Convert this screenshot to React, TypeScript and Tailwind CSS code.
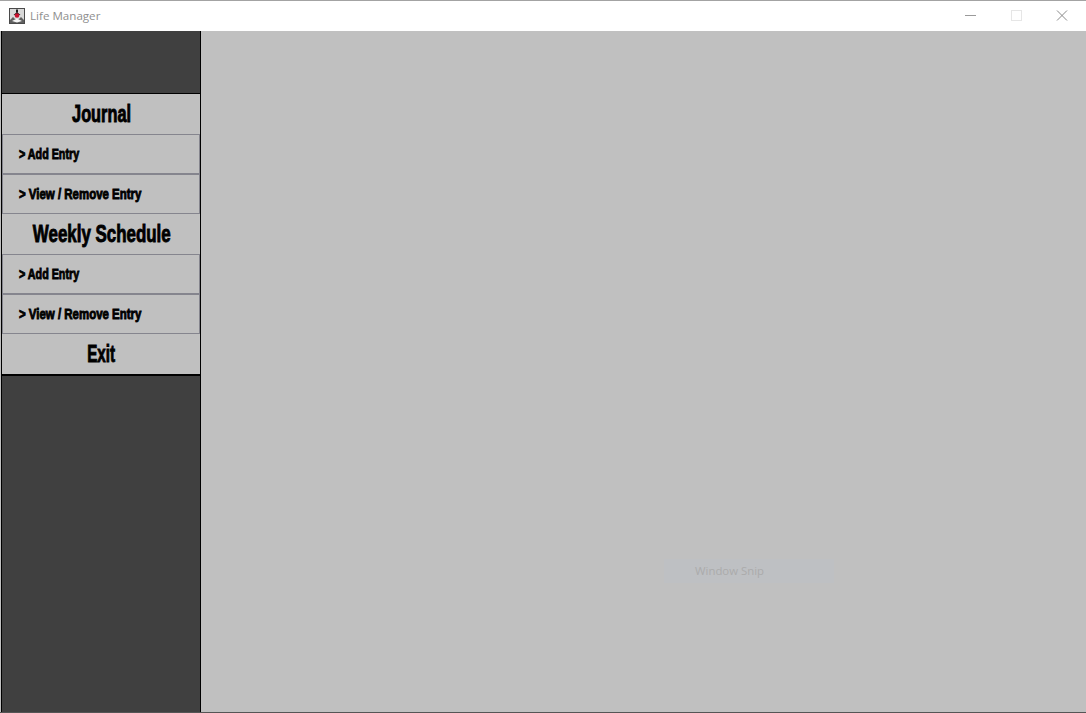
import React from "react";

const impact = "font-['Liberation_Sans',sans-serif] font-bold text-black [-webkit-text-stroke:0.9px_#000] whitespace-nowrap inline-block";

function Header({ label, scale }: { label: string; scale: string }) {
  return (
    <div className="h-10 pt-px pl-px flex items-center justify-center bg-[#c0c0c0] overflow-hidden">
      <span className={`${impact} text-[23px] ${scale}`}>{label}</span>
    </div>
  );
}

function Item({ label, scale }: { label: string; scale: string }) {
  return (
    <div className="h-10 pl-[16px] pt-[2px] flex items-center bg-[#c0c0c0] border border-[#85858e] overflow-hidden">
      <span className={`${impact} text-[14.5px] [-webkit-text-stroke:0.6px_#000] origin-left ${scale}`}>{label}</span>
    </div>
  );
}

function AppIcon() {
  return (
    <svg width="16" height="16" viewBox="0 0 16 16" className="shrink-0">
      <rect x="0.5" y="0.5" width="15" height="15" fill="#d8d8d8" stroke="#4a4a4a" />
      <path d="M1 15 V12 L4 9 L6 11 L10 11 L12 9 L15 12 V15 Z" fill="#5f5f5f" />
      <path d="M3 13 L8 10.5 L13 13 L8 14.5 Z" fill="#f4f4f4" />
      <rect x="7" y="1.5" width="2" height="3" fill="#1c1c1c" />
      <path d="M4.5 7 H11.5 L8 4 Z" fill="#1c1c1c" />
      <circle cx="8" cy="7.5" r="2.3" fill="#c8102e" />
    </svg>
  );
}

export default function App() {
  return (
    <div className="w-[1086px] h-[713px] overflow-hidden flex flex-col bg-[#c0c0c0] border-t border-[#a3a3a3] font-['Liberation_Sans',sans-serif]">
      <div className="h-[30px] shrink-0 bg-white flex items-center pl-[9px]">
        <AppIcon />
        <span className="ml-[5px] text-[11.6px] text-[#8f8f8f] font-['Open_Sans',sans-serif]">Life Manager</span>
        <div className="ml-auto flex items-center pr-px">
          <svg width="46" height="30" viewBox="0 0 46 30">
            <path d="M18 14.5 H29" stroke="#9a9a9a" strokeWidth="1" />
          </svg>
          <svg width="46" height="30" viewBox="0 0 46 30">
            <rect x="18.5" y="9.5" width="10" height="10" fill="none" stroke="#e6e6e6" strokeWidth="1" />
          </svg>
          <svg width="46" height="30" viewBox="0 0 46 30">
            <path d="M18 9.5 L28 19.5 M28 9.5 L18 19.5" stroke="#8a8a8a" strokeWidth="1" fill="none" />
          </svg>
        </div>
      </div>
      <div className="flex-1 flex min-h-0 pl-px border-b border-[#555]">
        <aside className="w-[200px] shrink-0 bg-[#404040] border-r border-black flex flex-col">
          <div className="h-[62px] shrink-0 border-l border-black" />
          <div className="flex flex-col border-y-2 border-black border-l border-l-black">
            <div className="-mt-px">
              <Header label="Journal" scale="scale-x-[0.71]" />
            </div>
            <Item label="> Add Entry" scale="scale-x-[0.74]" />
            <Item label="> View / Remove Entry" scale="scale-x-[0.79]" />
            <Header label="Weekly Schedule" scale="scale-x-[0.735]" />
            <Item label="> Add Entry" scale="scale-x-[0.74]" />
            <Item label="> View / Remove Entry" scale="scale-x-[0.79]" />
            <Header label="Exit" scale="scale-x-[0.66]" />
          </div>
          <div className="flex-1 border-l border-black" />
        </aside>
        <main className="relative flex-1 bg-[#c0c0c0]">
          <div className="absolute left-[463px] top-[528px] w-[170px] h-[24px] flex items-center pl-[31px] bg-[#bec0c3] text-[11.4px] text-[#ababab] font-['Open_Sans',sans-serif]">
            Window Snip
          </div>
        </main>
      </div>
    </div>
  );
}
